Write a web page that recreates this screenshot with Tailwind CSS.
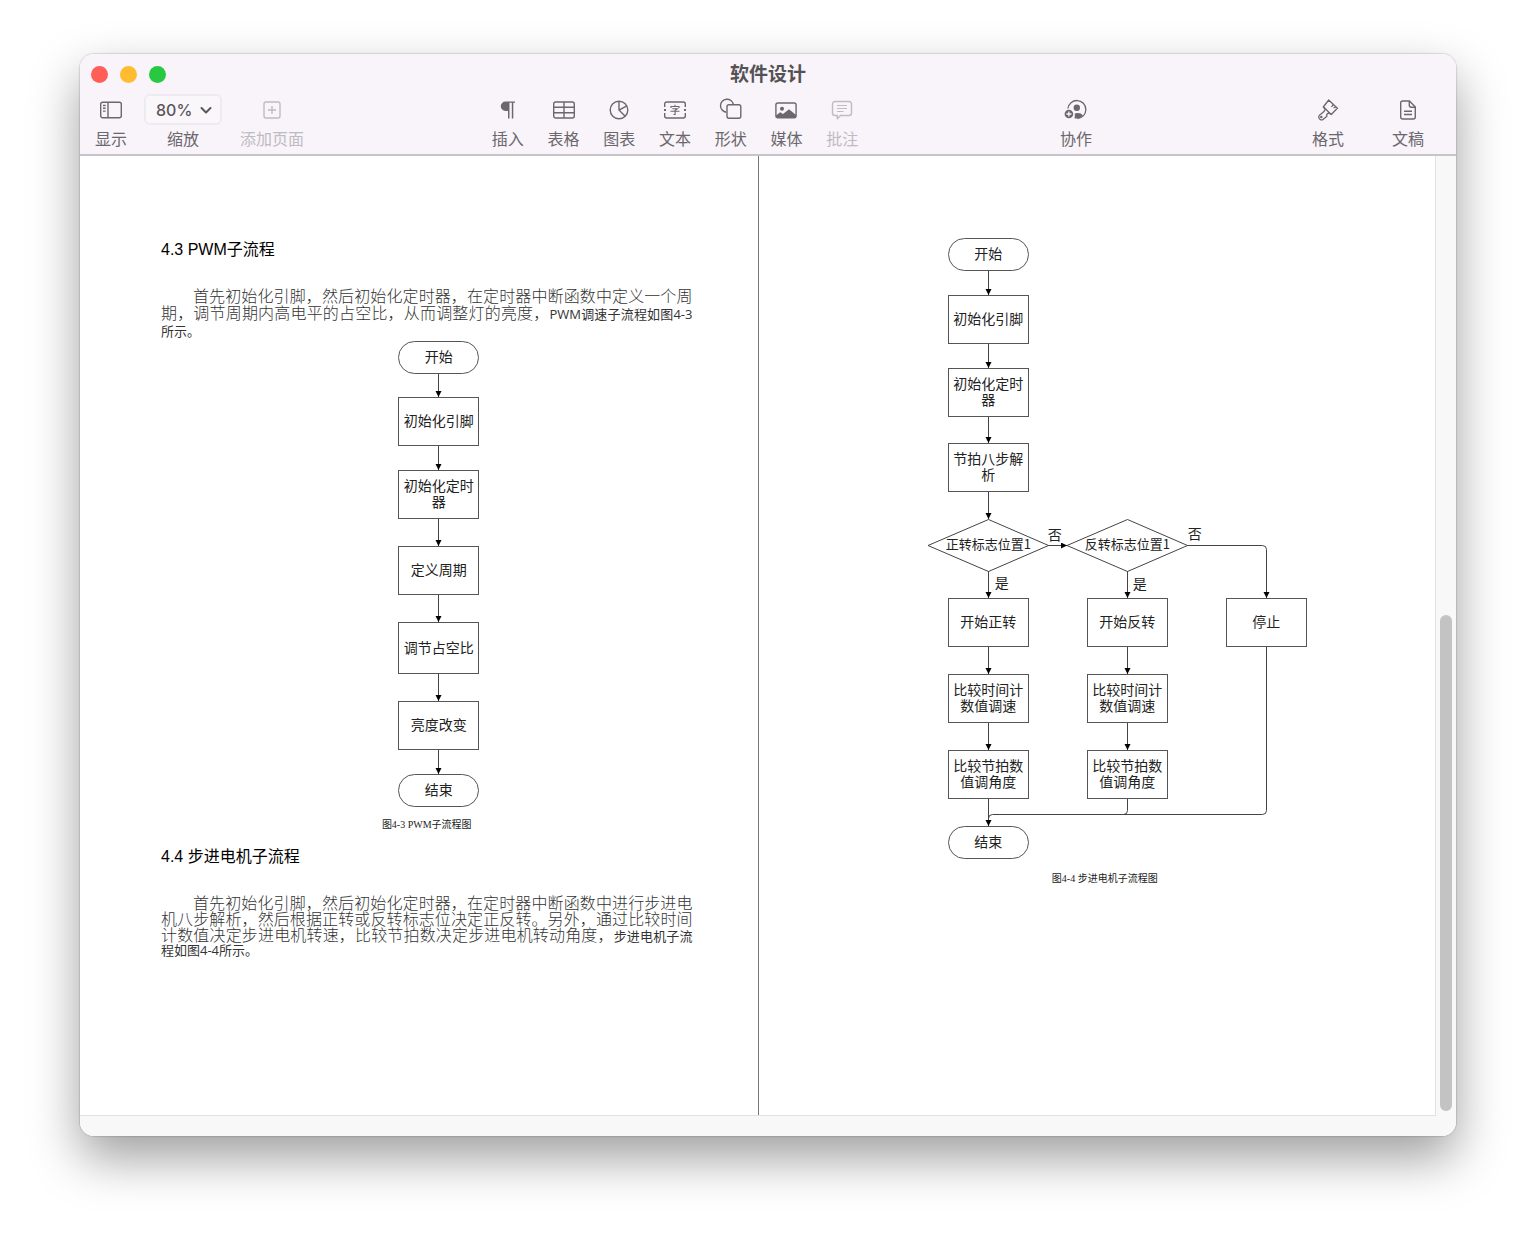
<!DOCTYPE html>
<html lang="zh-CN">
<head>
<meta charset="utf-8">
<meta name="viewport" content="width=device-width, initial-scale=1">
<title>软件设计</title>
<script src="https://cdn.jsdelivr.net/npm/@tailwindcss/browser@4"></script>
</head>
<body class="min-h-screen bg-white px-20 pt-[54px] pb-[106px] font-['Noto_Sans_CJK_SC',sans-serif] text-black">
<div class="overflow-hidden rounded-[14px] bg-white shadow-[0_0_1px_1px_rgba(0,0,0,0.12),0_22px_50px_rgba(0,0,0,0.38)]">

  <header class="border-b-2 border-[#c9c4ca] bg-[#f8f4fa] pb-1.5 text-[#6b676c]">
    <div class="grid h-10 grid-cols-[1fr_auto_1fr] items-center px-[11px]">
      <div class="flex gap-3">
        <button aria-label="关闭" class="size-[17px] rounded-full bg-[#ff5f57]"></button>
        <button aria-label="最小化" class="size-[17px] rounded-full bg-[#febc2e]"></button>
        <button aria-label="缩放窗口" class="size-[17px] rounded-full bg-[#28c840]"></button>
      </div>
      <h1 class="pb-0.5 text-[19px] leading-6 font-bold text-[#555256]">软件设计</h1>
    </div>

    <div class="flex pr-8 pl-[15px] text-base leading-5">
      <button class="flex w-8 flex-col items-center gap-0.5 whitespace-nowrap">
        <span class="flex h-8 items-center"><svg class="size-6" viewBox="0 0 24 24" fill="none" stroke="currentColor" stroke-width="1.4"><rect x="1.7" y="4.2" width="20.6" height="15.6" rx="2"/><path d="M9 4.2v15.6M4 7.5h2.6M4 10.3h2.6M4 13.1h2.6"/></svg></span>
        <span>显示</span>
      </button>
      <div class="ml-[17px] flex w-[78px] flex-col items-center gap-0.5">
        <div class="relative h-8 w-full">
          <select id="zoom" class="h-[31px] w-full appearance-none rounded-md border-2 border-[#efeaf1] bg-[#faf7fb] pl-[10px] font-['Inter',sans-serif] text-base font-medium text-[#5a565b]"><option>80%</option><option>100%</option></select>
          <svg class="pointer-events-none absolute top-2 right-2 size-4" viewBox="0 0 16 16" fill="none" stroke="#5a565b" stroke-width="2" stroke-linecap="round" stroke-linejoin="round"><path d="M3.500 6l4.500 4.500L12.500 6"/></svg>
        </div>
        <label for="zoom">缩放</label>
      </div>
      <button disabled class="ml-[18px] flex w-16 flex-col items-center gap-0.5 whitespace-nowrap text-[#bfbbc1]">
        <span class="flex h-8 items-center"><svg class="size-6" viewBox="0 0 24 24" fill="none" stroke="currentColor" stroke-width="1.4"><rect x="4" y="4" width="16" height="16" rx="2"/><path d="M12 8v8M8 12h8"/></svg></span>
        <span>添加页面</span>
      </button>

      <div class="grow-[176]"></div>

      <div class="grid w-[390px] grid-cols-7">
        <button class="flex flex-col items-center gap-0.5">
          <span class="flex h-8 items-center"><svg class="size-6" viewBox="0 0 24 24" fill="currentColor"><path d="M9.500 3.500H19v1.300h-1.700v15.700h-1.500V4.800h-2.300v15.700H12v-7.500H9.500a4.700 4.700 0 0 1 0-9.500z"/></svg></span>
          <span>插入</span>
        </button>
        <button class="flex flex-col items-center gap-0.5">
          <span class="flex h-8 items-center"><svg class="size-6" viewBox="0 0 24 24" fill="none" stroke="currentColor" stroke-width="1.4"><rect x="1.700" y="4" width="20.600" height="16" rx="2"/><path d="M12 4v16M1.700 9.300h20.600M1.700 14.700h20.600"/></svg></span>
          <span>表格</span>
        </button>
        <button class="flex flex-col items-center gap-0.5">
          <span class="flex h-8 items-center"><svg class="size-6" viewBox="0 0 24 24" fill="none" stroke="currentColor" stroke-width="1.400" stroke-linejoin="round"><circle cx="12" cy="12" r="8.800"/><path d="M12 3.200V12l6.200 6.200M12.500 11.800l7.300-4"/></svg></span>
          <span>图表</span>
        </button>
        <button class="flex flex-col items-center gap-0.5">
          <span class="flex h-8 items-center"><svg class="size-6" viewBox="0 0 24 24" fill="none" stroke="currentColor" stroke-width="1.400"><path d="M1.700 9V6a2 2 0 0 1 2-2h16.600a2 2 0 0 1 2 2v3M1.700 15v3a2 2 0 0 0 2 2h16.600a2 2 0 0 0 2-2v-3"/><path d="M1 12h2M21 12h2" stroke-width="2"/><path d="M12 6.800v1.500M8 10V8.500h8V10M9.300 10.700h5L12.100 12.300v4.200h-1.600M7.500 13.300h9" stroke-width="1.100"/></svg></span>
          <span>文本</span>
        </button>
        <button class="flex flex-col items-center gap-0.5">
          <span class="flex h-8 items-center"><svg class="size-6" viewBox="0 0 24 24" fill="none" stroke="currentColor" stroke-width="1.400"><path d="M7.300 14.200A6.500 6.500 0 1 1 14.400 6.500"/><rect x="8" y="6.800" width="13.800" height="13.400" rx="2"/></svg></span>
          <span>形状</span>
        </button>
        <button class="flex flex-col items-center gap-0.5">
          <span class="flex h-8 items-center"><svg class="size-6" viewBox="0 0 24 24"><rect x="1.900" y="5" width="20.200" height="14.800" rx="2" fill="none" stroke="currentColor" stroke-width="1.400"/><circle cx="8" cy="10.700" r="2" fill="currentColor"/><path d="M2 17.500l4.200-3.300 2.800 1.700 6-4.600 7 5.700V19H2z" fill="currentColor"/></svg></span>
          <span>媒体</span>
        </button>
        <button disabled class="flex flex-col items-center gap-0.5 text-[#bfbbc1]">
          <span class="flex h-8 items-center"><svg class="size-6" viewBox="0 0 24 24" fill="none" stroke="currentColor" stroke-width="1.400" stroke-linejoin="round"><path d="M5 3.500h14a2.500 2.500 0 0 1 2.500 2.500v9a2.500 2.500 0 0 1-2.500 2.500h-8.500L7.300 20.700v-3.200H5A2.500 2.500 0 0 1 2.500 15V6A2.500 2.500 0 0 1 5 3.500z"/><path d="M7 7.500h10M7 10.500h10M7 13.500h6.500" stroke-width="1.200"/></svg></span>
          <span>批注</span>
        </button>
      </div>

      <div class="grow-[190]"></div>

      <button class="flex w-8 flex-col items-center gap-0.5 whitespace-nowrap">
        <span class="flex h-8 items-center"><svg class="size-6" viewBox="0 0 24 24"><path d="M3.900 10.500A9 9 0 1 1 13.500 20.500" fill="none" stroke="currentColor" stroke-width="1.300"/><circle cx="12.800" cy="9.800" r="3.200" fill="currentColor"/><path d="M10.300 20.200c.8-1.300.8-2.800.2-4.400 3-1.400 7-.6 8.300 1.700-1.800 2.200-5 3.500-8.500 2.700z" fill="currentColor"/><circle cx="4.900" cy="16" r="4.300" fill="currentColor"/><path d="M4.900 13.500v5M2.400 16h5" stroke="#f8f4fa" stroke-width="1.300"/></svg></span>
        <span>协作</span>
      </button>

      <div class="grow-[220]"></div>

      <div class="flex gap-12">
        <button class="flex w-8 flex-col items-center gap-0.5 whitespace-nowrap">
          <span class="flex h-8 items-center"><svg class="size-6" viewBox="0 0 24 24" fill="none" stroke="currentColor" stroke-width="1.300" stroke-linejoin="round"><path d="M12.700 2L21.400 10.200 15.200 16.500 12.600 14.700 10.700 16.500 10.900 18.200 7.300 21.200C5.500 23 2 21 2.800 18.300 4 16 6.700 15.300 8 13.400L9.400 11.400 7.300 9z"/><path d="M7.800 9.200l7.100 7M17.400 6.500l-1.900 2.300M20 9l-2.500 1"/><circle cx="5.300" cy="19" r=".6"/></svg></span>
          <span>格式</span>
        </button>
        <button class="flex w-8 flex-col items-center gap-0.5 whitespace-nowrap">
          <span class="flex h-8 items-center"><svg class="size-6" viewBox="0 0 24 24" fill="none" stroke="currentColor" stroke-width="1.400" stroke-linejoin="round"><path d="M6.700 3h6.800l5.800 6v10a2 2 0 0 1-2 2H6.700a2 2 0 0 1-2-2V5a2 2 0 0 1 2-2z"/><path d="M13.300 3v4.300a2 2 0 0 0 2 2h4M8 13.300h8M8 16.500h8"/></svg></span>
          <span>文稿</span>
        </button>
      </div>
    </div>
  </header>

  <div class="grid grid-cols-[1fr_20px] bg-[#f8f8f8]">
    <main class="grid min-h-[960px] grid-cols-2 border-r border-b border-[#e2e2e2] bg-white">

      <section class="-mr-px border-r border-[#777] pt-[82px] pr-[65px] pl-[81px]">
        <h2 class="font-['Liberation_Sans','Noto_Sans_CJK_SC',sans-serif] text-base leading-6">4.3 PWM子流程</h2>
        <p class="mt-[25px] text-justify text-base leading-[17px] font-light text-[#333] [text-align-last:justify]">
          <span class="block pl-8">首先初始化引脚，然后初始化定时器，在定时器中断函数中定义一个周</span>
          <span class="block">期，调节周期内高电平的占空比，从而调整灯的亮度，<span class="font-['Open_Sans','Noto_Sans_CJK_SC',sans-serif] text-[13px] leading-3 font-normal">PWM调速子流程如图4-3</span></span>
          <span class="block text-[13px] leading-5 font-normal [text-align-last:left]">所示。</span>
        </p>

        <figure>
          <div class="flex justify-center pl-6">
            <div class="relative h-[466px] w-[81px] text-center text-[14px] leading-4 text-[#222]">
              <svg class="absolute inset-0 h-[466px] w-[81px]" viewBox="0 0 81 466" fill="none" stroke="#444">
                <defs><marker id="arrow" markerUnits="userSpaceOnUse" markerWidth="7" markerHeight="7" refX="6" refY="3" orient="auto"><path d="M0 0L6 3 0 6z" fill="#000" stroke="none"/></marker></defs>
                <path d="M40.500 33V56" marker-end="url(#arrow)"/>
                <path d="M40.500 105V129" marker-end="url(#arrow)"/>
                <path d="M40.500 178V205" marker-end="url(#arrow)"/>
                <path d="M40.500 254V281" marker-end="url(#arrow)"/>
                <path d="M40.500 333V360" marker-end="url(#arrow)"/>
                <path d="M40.500 409V433" marker-end="url(#arrow)"/>
              </svg>
              <div class="absolute top-0 left-0 flex h-[33px] w-[81px] items-center justify-center rounded-full border border-[#555] pb-[3px]">开始</div>
              <div class="absolute top-[56px] left-0 flex h-[49px] w-[81px] items-center justify-center border border-[#555] pb-[3px]">初始化引脚</div>
              <div class="absolute top-[129px] left-0 flex h-[49px] w-[81px] items-center justify-center border border-[#555] pb-[3px]">初始化定时<br>器</div>
              <div class="absolute top-[205px] left-0 flex h-[49px] w-[81px] items-center justify-center border border-[#555] pb-[3px]">定义周期</div>
              <div class="absolute top-[281px] left-0 flex h-[52px] w-[81px] items-center justify-center border border-[#555] pb-[3px]">调节占空比</div>
              <div class="absolute top-[360px] left-0 flex h-[49px] w-[81px] items-center justify-center border border-[#555] pb-[3px]">亮度改变</div>
              <div class="absolute top-[433px] left-0 flex h-[33px] w-[81px] items-center justify-center rounded-full border border-[#555] pb-[3px]">结束</div>
            </div>
          </div>
          <figcaption class="mt-2 text-center font-['Liberation_Serif','Noto_Sans_CJK_SC',serif] text-[10px] leading-5 text-[#222]">图4-3 PWM子流程图</figcaption>
        </figure>

        <h2 class="mt-[10px] font-['Liberation_Sans','Noto_Sans_CJK_SC',sans-serif] text-base leading-6">4.4 步进电机子流程</h2>
        <p class="mt-[25px] text-justify text-base leading-4 font-light text-[#333] [text-align-last:justify]">
          <span class="block pl-8">首先初始化引脚，然后初始化定时器，在定时器中断函数中进行步进电</span>
          <span class="block">机八步解析，然后根据正转或反转标志位决定正反转。另外，通过比较时间</span>
          <span class="block">计数值决定步进电机转速，比较节拍数决定步进电机转动角度，<span class="text-[13px] leading-3 font-normal">步进电机子流</span></span>
          <span class="block font-['Open_Sans','Noto_Sans_CJK_SC',sans-serif] text-[13px] font-normal [text-align-last:left]">程如图4-4所示。</span>
        </p>
      </section>

      <section class="pt-[82px] pr-[65px] pl-[82px]">
        <figure>
          <div class="flex justify-center pl-6">
            <div class="relative h-[621px] w-[380px] text-center text-[14px] leading-4 text-[#222]">
              <svg class="absolute inset-0 h-[621px] w-[380px]" viewBox="0 0 380 621" fill="none" stroke="#444">
                <path d="M61.500 33V57" marker-end="url(#arrow)"/>
                <path d="M61.500 106V130" marker-end="url(#arrow)"/>
                <path d="M61.500 179V205" marker-end="url(#arrow)"/>
                <path d="M61.500 254V281" marker-end="url(#arrow)"/>
                <path d="M61.500 333V360" marker-end="url(#arrow)"/>
                <path d="M61.500 409V436" marker-end="url(#arrow)"/>
                <path d="M61.500 485V512" marker-end="url(#arrow)"/>
                <path d="M61.500 561V588" marker-end="url(#arrow)"/>
                <path d="M200.500 333V360" marker-end="url(#arrow)"/>
                <path d="M200.500 409V436" marker-end="url(#arrow)"/>
                <path d="M200.500 485V512" marker-end="url(#arrow)"/>
                <path d="M121 307.500H140" marker-end="url(#arrow)"/>
                <path d="M260 307.500H335.500Q339.500 307.500 339.500 311.500V360" marker-end="url(#arrow)"/>
                <path d="M339.500 409V572.500Q339.500 576.500 335.500 576.500H65.500Q61.500 576.500 61.500 580.500M200.500 561V572.500Q200.500 576.500 196.500 576.500"/>
                <path d="M1 307.500L61.500 281.500 121.500 307.500 61.500 333.500zM140 307.500L200.500 281.500 260.500 307.500 200.500 333.500z"/>
              </svg>
              <div class="absolute top-0 left-[21px] flex h-[33px] w-[81px] items-center justify-center rounded-full border border-[#555] pb-[3px]">开始</div>
              <div class="absolute top-[57px] left-[21px] flex h-[49px] w-[81px] items-center justify-center border border-[#555] pb-[3px]">初始化引脚</div>
              <div class="absolute top-[130px] left-[21px] flex h-[49px] w-[81px] items-center justify-center border border-[#555] pb-[3px]">初始化定时<br>器</div>
              <div class="absolute top-[205px] left-[21px] flex h-[49px] w-[81px] items-center justify-center border border-[#555] pb-[3px]">节拍八步解<br>析</div>
              <div class="absolute top-[281px] left-[1px] flex h-[53px] w-[121px] items-center justify-center pb-[3px] text-[13px]">正转标志位置1</div>
              <div class="absolute top-[281px] left-[140px] flex h-[53px] w-[121px] items-center justify-center pb-[3px] text-[13px]">反转标志位置1</div>
              <span class="absolute top-[288px] left-[121px]">否</span>
              <span class="absolute top-[287px] left-[261px]">否</span>
              <span class="absolute top-[336px] left-[68px]">是</span>
              <span class="absolute top-[337px] left-[206px]">是</span>
              <div class="absolute top-[360px] left-[21px] flex h-[49px] w-[81px] items-center justify-center border border-[#555] pb-[3px]">开始正转</div>
              <div class="absolute top-[360px] left-[160px] flex h-[49px] w-[81px] items-center justify-center border border-[#555] pb-[3px]">开始反转</div>
              <div class="absolute top-[360px] left-[299px] flex h-[49px] w-[81px] items-center justify-center border border-[#555] pb-[3px]">停止</div>
              <div class="absolute top-[436px] left-[21px] flex h-[49px] w-[81px] items-center justify-center border border-[#555] pb-[3px]">比较时间计<br>数值调速</div>
              <div class="absolute top-[436px] left-[160px] flex h-[49px] w-[81px] items-center justify-center border border-[#555] pb-[3px]">比较时间计<br>数值调速</div>
              <div class="absolute top-[512px] left-[21px] flex h-[49px] w-[81px] items-center justify-center border border-[#555] pb-[3px]">比较节拍数<br>值调角度</div>
              <div class="absolute top-[512px] left-[160px] flex h-[49px] w-[81px] items-center justify-center border border-[#555] pb-[3px]">比较节拍数<br>值调角度</div>
              <div class="absolute top-[588px] left-[21px] flex h-[33px] w-[81px] items-center justify-center rounded-full border border-[#555] pb-[3px]">结束</div>
            </div>
          </div>
          <figcaption class="mt-[10px] text-center font-['Liberation_Serif','Noto_Sans_CJK_SC',serif] text-[10px] leading-5 text-[#222]">图4-4 步进电机子流程图</figcaption>
        </figure>
      </section>
    </main>

    <div class="flex flex-col items-center justify-end pb-[5px]">
      <div class="h-[496px] w-3 rounded-full bg-[#c3c3c3]"></div>
    </div>
  </div>
  <footer class="h-5 bg-[#f8f8f8]"></footer>
</div>
</body>
</html>
